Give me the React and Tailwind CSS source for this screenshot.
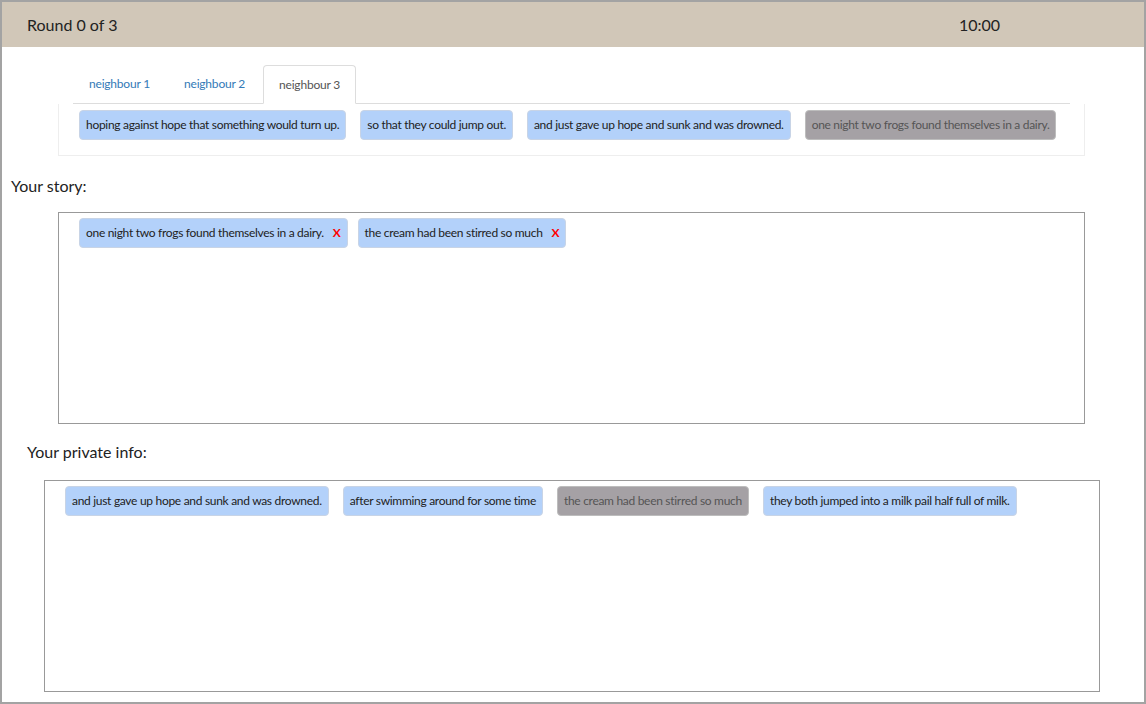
const neighbourChips = [
  { text: 'hoping against hope that something would turn up.' },
  { text: 'so that they could jump out.' },
  { text: 'and just gave up hope and sunk and was drowned.' },
  { text: 'one night two frogs found themselves in a dairy.', used: true },
];

const storyChips = [
  'one night two frogs found themselves in a dairy.',
  'the cream had been stirred so much',
];

const privateChips = [
  { text: 'and just gave up hope and sunk and was drowned.' },
  { text: 'after swimming around for some time' },
  { text: 'the cream had been stirred so much', used: true },
  { text: 'they both jumped into a milk pail half full of milk.' },
];

function Chip({ text, used, removable }) {
  return (
    <div
      className={
        used
          ? 'shrink-0 whitespace-nowrap flex items-center h-[30px] px-[6px] rounded-[4px] border border-[#bdbdbd] bg-[#a5a1a5] text-[#555] text-[12px] tracking-[-0.3px]'
          : 'shrink-0 whitespace-nowrap flex items-center h-[30px] px-[6px] rounded-[4px] border border-[#c8d4e6] bg-[#b3d1fa] text-[#222] text-[12px] tracking-[-0.3px]'
      }
    >
      <span>{text}</span>
      {removable && <span className="ml-[9px] text-[#ff0000] font-bold text-[12px]">X</span>}
    </div>
  );
}

export default function App() {
  return (
    <div
      className="w-[1146px] h-[704px] border-2 border-[#a3a3a3] bg-white overflow-hidden text-[#222]"
      style={{ fontFamily: 'Lato, "Open Sans", sans-serif' }}
    >
      {/* header */}
      <div className="h-[45px] bg-[#d1c7b8] flex items-center justify-between pl-[25px] pr-[144px] text-[16px]">
        <span>Round 0 of 3</span>
        <span>10:00</span>
      </div>

      {/* neighbour tabs */}
      <div className="ml-[71px] mt-[18px] w-[997px] flex border-b border-[#dddddd] text-[12px] tracking-[-0.2px]">
        <div className="h-[38px] px-[16px] flex items-center text-[#337ab7]">neighbour 1</div>
        <div className="h-[38px] px-[18px] flex items-center text-[#337ab7]">neighbour 2</div>
        <div className="h-[39px] -mb-px px-[15px] flex items-center text-[#555] bg-white border border-[#dddddd] border-b-white rounded-t-[4px]">
          neighbour 3
        </div>
      </div>
      <div className="ml-[56px] w-[1027px] h-[52px] border border-[#eeeeee] border-t-0 flex gap-[14px] pl-[20px] pt-[6px]">
        {neighbourChips.map((c) => (
          <Chip key={c.text} text={c.text} used={c.used} />
        ))}
      </div>

      {/* story */}
      <div className="ml-[9px] mt-[20px] text-[16px] leading-[20px]">Your story:</div>
      <div className="ml-[56px] mt-[16px] w-[1027px] h-[212px] border border-[#999999] flex items-start gap-[10px] pl-[20px] pt-[5px]">
        {storyChips.map((t) => (
          <Chip key={t} text={t} removable />
        ))}
      </div>

      {/* private info */}
      <div className="ml-[25px] mt-[18px] text-[16px] leading-[20px]">Your private info:</div>
      <div className="ml-[42px] mt-[18px] w-[1056px] h-[212px] border border-[#999999] flex items-start gap-[14px] pl-[20px] pt-[5px]">
        {privateChips.map((c) => (
          <Chip key={c.text} text={c.text} used={c.used} />
        ))}
      </div>
    </div>
  );
}
